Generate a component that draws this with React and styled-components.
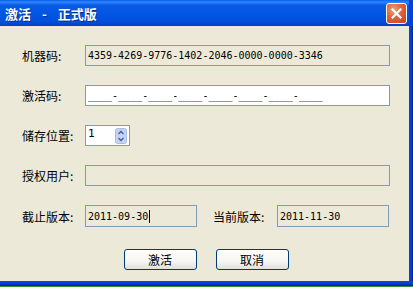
import React from 'react';
import styled, { createGlobalStyle } from 'styled-components';

const GlobalStyle = createGlobalStyle`
  html, body {
    margin: 0;
    padding: 0;
    background: #3a8a2e;
  }
`;

const CJK = `"Noto Sans CJK SC", "DejaVu Sans", sans-serif`;
const MONO = `"DejaVu Sans Mono", "Liberation Mono", monospace`;

function CloseIcon() {
  return (
    <svg width="11" height="11" viewBox="0 0 11 11">
      <path d="M1.5 1.5 L9.5 9.5 M9.5 1.5 L1.5 9.5" stroke="#fff" strokeWidth="2.2" strokeLinecap="square" />
    </svg>
  );
}

function SpinArrows() {
  return (
    <svg width="12" height="16" viewBox="0 0 12 16">
      <rect x="0.5" y="0.5" width="11" height="15" rx="2" fill="#c3d2f5" stroke="#a9bde9" />
      <path d="M3.5 6 L6 3.5 L8.5 6" fill="none" stroke="#4d6185" strokeWidth="1.4" />
      <path d="M3.5 10 L6 12.5 L8.5 10" fill="none" stroke="#4d6185" strokeWidth="1.4" />
    </svg>
  );
}

function App() {
  return (
    <Page>
      <GlobalStyle />
      <Window>
        <TitleBar>
          <Title>激活 - 正式版</Title>
          <CloseButton>
            <CloseIcon />
          </CloseButton>
        </TitleBar>
        <Client>
          <Form>
            <Row>
              <Label>机器码:</Label>
              <Field $disabled>4359-4269-9776-1402-2046-0000-0000-3346</Field>
            </Row>
            <Row>
              <Label>激活码:</Label>
              <Field>____-____-____-____-____-____-____-____</Field>
            </Row>
            <Row>
              <Label>储存位置:</Label>
              <SpinBox>
                <span>1</span>
                <SpinArrows />
              </SpinBox>
            </Row>
            <Row>
              <Label>授权用户:</Label>
              <Field $disabled></Field>
            </Row>
            <Row $tall>
              <Label>截止版本:</Label>
              <Field $disabled $width={112}>
                2011-09-30<Caret />
              </Field>
              <Label $second>当前版本:</Label>
              <Field $disabled $width={112}>2011-11-30</Field>
            </Row>
            <ButtonRow>
              <Button>激活</Button>
              <Button>取消</Button>
            </ButtonRow>
          </Form>
          <RightFrame />
        </Client>
        <BottomFrame />
      </Window>
    </Page>
  );
}

const Page = styled.div`
  width: 413px;
  height: 287px;
  display: flex;
  flex-direction: column;
  overflow: hidden;
  background: #3a8a2e;
`;

const Window = styled.div`
  height: 286px;
  display: flex;
  flex-direction: column;
`;

const TitleBar = styled.div`
  height: 26px;
  flex-shrink: 0;
  display: flex;
  align-items: center;
  justify-content: space-between;
  padding: 0 5px 0 5px;
  background: linear-gradient(
    to bottom,
    #0a5fe8 0%,
    #2f86ff 8%,
    #0a5be3 20%,
    #0055e3 55%,
    #004fd8 85%,
    #003fc0 100%
  );
  border-right: 4px solid #0a3ed8;
  box-sizing: border-box;
`;

const Title = styled.div`
  font-family: ${CJK};
  font-size: 13px;
  font-weight: bold;
  color: #fff;
  text-shadow: 1px 1px 0 #0b2f8c;
  white-space: pre;
  word-spacing: 8px;
`;

const CloseButton = styled.div`
  width: 21px;
  height: 21px;
  box-sizing: border-box;
  margin-right: -3px;
  display: flex;
  align-items: center;
  justify-content: center;
  border: 1px solid #fff;
  border-radius: 3px;
  background: radial-gradient(circle at 35% 30%, #f29c7c 0%, #e0623c 45%, #c8401c 100%);
`;

const Client = styled.div`
  flex: 1;
  display: flex;
  background: #ece9d8;
`;

const Form = styled.div`
  flex: 1;
  display: flex;
  flex-direction: column;
  gap: 19px;
  padding: 19px 19px 0 22px;
`;

const Row = styled.div`
  display: flex;
  align-items: center;
  height: ${(p) => (p.$tall ? '22px' : '21px')};
`;

const Label = styled.div`
  width: ${(p) => (p.$second ? '64px' : '63px')};
  margin-left: ${(p) => (p.$second ? '16px' : '0')};
  flex-shrink: 0;
  font-family: ${CJK};
  font-size: 12px;
  color: #000;
  white-space: nowrap;
`;

const Field = styled.div`
  ${(p) => (p.$width ? `width: ${p.$width}px;` : 'flex: 1;')}
  height: 100%;
  box-sizing: border-box;
  display: flex;
  align-items: center;
  padding-left: 2px;
  border: 1px solid #7f9db9;
  background: ${(p) => (p.$disabled ? '#ece9d8' : '#fff')};
  font-family: ${MONO};
  font-size: 10px;
  color: #000;
  white-space: pre;
  overflow: hidden;
`;

const Caret = styled.span`
  display: inline-block;
  width: 1px;
  height: 13px;
  margin-left: 1px;
  background: #000;
`;

const SpinBox = styled.div`
  width: 45px;
  height: 21px;
  box-sizing: border-box;
  display: flex;
  align-items: center;
  justify-content: space-between;
  padding: 0 2px 0 2px;
  border: 1px solid #7f9db9;
  background: #fff;
  font-family: ${MONO};
  font-size: 11px;
  color: #000;

  span {
    align-self: flex-start;
    margin-top: 1px;
  }
`;

const ButtonRow = styled.div`
  display: flex;
  justify-content: center;
  gap: 19px;
  margin-top: 3px;
`;

const Button = styled.div`
  width: 73px;
  height: 21px;
  box-sizing: border-box;
  display: flex;
  align-items: center;
  justify-content: center;
  border: 1px solid #003c74;
  border-radius: 3px;
  background: linear-gradient(to bottom, #ffffff 0%, #f6f5f0 60%, #e3e0d5 100%);
  font-family: ${CJK};
  font-size: 12px;
  color: #000;
`;

const RightFrame = styled.div`
  width: 4px;
  background: linear-gradient(to right, #0a48e0, #0838cc 60%, #00209a);
`;

const BottomFrame = styled.div`
  height: 5px;
  flex-shrink: 0;
  background: linear-gradient(to bottom, #0a48e0, #0838cc 60%, #00209a);
`;

export default App;
